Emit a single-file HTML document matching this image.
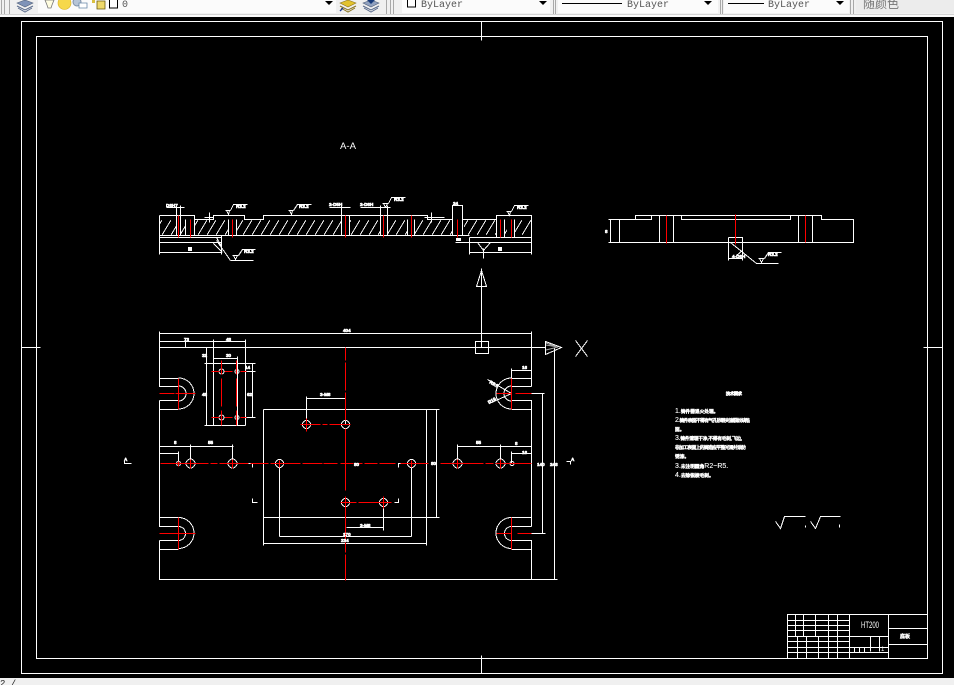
<!DOCTYPE html>
<html><head><meta charset="utf-8"><style>
html,body{margin:0;padding:0;background:#000;width:954px;height:685px;overflow:hidden}
svg{display:block;position:absolute;left:0;top:0}
text{font-family:"Liberation Sans","Noto Sans CJK SC",sans-serif}
.b{fill:#fff;stroke:#fff;stroke-width:.55;font-size:4.7px}
.n{font-size:7px;stroke-width:.1}
.d{fill:#fff;stroke:#fff;stroke-width:.6;font-size:4.6px;font-weight:bold}
.t{font-family:"Liberation Mono","Noto Sans CJK SC",monospace;font-size:10px;fill:#555}
</style></head><body>
<svg width="954" height="685" viewBox="0 0 954 685">
<defs>
<pattern id="h" patternUnits="userSpaceOnUse" x="0" y="220" width="9" height="15">
<path d="M0 15L9 0" stroke="#fff" stroke-width="1" fill="none" shape-rendering="crispEdges"/>
</pattern>
</defs>
<rect width="954" height="685" fill="#000"/>

<!-- top toolbar -->
<rect width="954" height="17" fill="#f0f0f0"/>
<rect y="14" width="954" height="1" fill="#d4d4d4"/>
<rect y="15" width="954" height="2" fill="#fafafa"/>
<g fill="#a8a8a8">
<rect x="1" y="0" width="1" height="14"/><rect x="4" y="0" width="1" height="14"/><rect x="9" y="0" width="1" height="14"/>
<rect x="386" y="0" width="1" height="14"/><rect x="390" y="0" width="1" height="14"/><rect x="393" y="0" width="1" height="14"/>
<rect x="553" y="0" width="1" height="14"/><rect x="555" y="0" width="1" height="14"/>
<rect x="720" y="0" width="1" height="14"/><rect x="722" y="0" width="1" height="14"/>
<rect x="850" y="0" width="1" height="14"/><rect x="853" y="0" width="1" height="14"/>
</g>
<rect x="38" y="0" width="298" height="13" fill="#fbfbfb"/>
<rect x="402" y="0" width="148" height="13" fill="#fbfbfb"/>
<rect x="558" y="0" width="160" height="13" fill="#fbfbfb"/>
<rect x="724" y="0" width="125" height="13" fill="#fbfbfb"/>
<rect x="856" y="0" width="98" height="13" fill="#ececec"/>
<!-- layer icons -->
<g>
<path d="M17 3L25 0L33 3L25 7Z" fill="#7f93b8" stroke="#52607a" stroke-width=".6"/>
<path d="M17 6L25 10L33 6M18 8L25 12L32 8" fill="none" stroke="#5a6b8c" stroke-width="1"/>
<path d="M45 0H54L52 5L51 8H48L47 5Z" fill="#fffde0" stroke="#777" stroke-width=".8"/>
<circle cx="64.500" cy="3" r="6.500" fill="#f6d84a" stroke="#d8b020" stroke-width=".6"/>
<circle cx="77" cy="2" r="4" fill="#b6c4d6" stroke="#7e90a8"/>
<path d="M79 3H87V8H79Z" fill="#fff" stroke="#6a88a8" stroke-width=".8"/>
<path d="M97 1H105V9H97Z" fill="#efd96a" stroke="#6b5a10" stroke-width=".8"/>
<path d="M92 0H95V3H92Z" fill="#d9c040"/>
<rect x="109.500" y="-1" width="8" height="9" fill="#fff" stroke="#000"/>
<text x="122" y="7" style="font-family:'Liberation Mono',monospace;font-size:10px" fill="#555">0</text>
<path d="M325 1H333L329 5Z" fill="#000"/>
<path d="M340 3L348 0L356 3L348 7Z" fill="#e2c22e" stroke="#8a7420" stroke-width=".6"/>
<path d="M340 6L348 10L356 6M341 8L348 12L355 8" fill="none" stroke="#8a7420" stroke-width="1"/>
<path d="M340 11L343 8" stroke="#1a3a9a" stroke-width="1.300"/>
<path d="M363 3L371 0L379 3L371 7Z" fill="#8fa0bf" stroke="#52607a" stroke-width=".6"/>
<path d="M363 6L371 10L379 6M364 8L371 12L378 8" fill="none" stroke="#5a6b8c" stroke-width="1"/>
<path d="M367 0H375L371 4Z" fill="#173a7a"/>
<rect x="407.500" y="-1" width="8" height="8" fill="#fff" stroke="#000"/>
<text class="t" x="421" y="7">ByLayer</text>
<path d="M539 1H547L543 5Z" fill="#000"/>
<rect x="562" y="3" width="60" height="1" fill="#000"/>
<text class="t" x="627" y="7">ByLayer</text>
<path d="M704 1H712L708 5Z" fill="#000"/>
<rect x="728" y="3" width="36" height="1" fill="#000"/>
<text class="t" x="768" y="7">ByLayer</text>
<path d="M836 1H844L840 5Z" fill="#000"/>
<text x="863" y="8" style="font-size:12px;font-family:'Liberation Sans','Noto Sans CJK SC',sans-serif" fill="#777">随颜色</text>
</g>

<!-- bottom bar -->
<rect x="0" y="678" width="954" height="7" fill="#f0f0f0"/>
<text x="0" y="686" style="font-family:'Liberation Mono',monospace;font-size:9px" fill="#222">2 /</text>

<!-- hatch -->
<g fill="url(#h)" shape-rendering="crispEdges">
<rect x="160" y="220" width="16" height="15"/>
<rect x="181" y="220" width="4" height="15"/>
<rect x="195" y="220" width="33" height="15"/>
<rect x="237" y="220" width="104" height="15"/>
<rect x="350" y="220" width="30" height="15"/>
<rect x="388" y="220" width="19" height="15"/>
<rect x="415" y="220" width="37" height="15"/>
<rect x="464" y="220" width="32" height="15"/>
<rect x="505" y="220" width="2" height="15"/>
<rect x="515" y="220" width="16" height="15"/>
</g>

<g transform="translate(.5 .5)" fill="none" stroke="#fff" stroke-width="1" shape-rendering="crispEdges">
<!-- frames -->
<path d="M21 21H942V673H21Z"/>
<path d="M36 36H927V658H36Z"/>
<path d="M481 21V40M481 655V673M21 347H40M923 347H942"/>

<!-- section view A-A -->
<path d="M159 215V254M159 215H194V219H213V215H244V219H263V215H427V219H452V205H462V219H496V215H531V254"/>
<path d="M159 235H469M159 237H221M159 242H221M159 252H221M221 235V254"/>
<path d="M469 237H531M455 242H531M469 237V254M469 252H531"/>
<path d="M176 205V235M180 205V235M185 219V235M194 215V235M228 219V235M236 219V235M341 205V235M349 215V235M380 205V235M387 205V235M407 219V235M414 219V235M452 219V235M462 219V235M496 215V237M504 219V237M514 219V237"/>
<path d="M166 207H184M329 207H350M360 207H390"/>
<path d="M209 212V222M204 217H213M431 212V222M424 217H436M433 217H444"/>
<!-- roughness marks -->
<path d="M225 210H230M226 210L228 214L229 210M230 210L233 204H247"/>
<path d="M288 210H293M289 210L291 214L292 210M293 210L297 204H311"/>
<path d="M382 203H388M383 203L385 207L387 203M388 203L391 197H405"/>
<path d="M506 211H511M507 211L509 215L510 211M511 211L514 205H528"/>
<path d="M232 255H238M233 255L235 259L237 255M238 255L242 249H255M230 260H253M216 240L230 260M213 243L222 252"/>
<path d="M477 242L483 250L490 242M483 248V258"/>
<path d="M216 237L221 246"/>

<!-- side view -->
<path d="M608 219H635V215H651V219H635M651 215H821V219H853V242H608M681 215V219H790V215M610 219V242M619 219V242M659 215V242M673 215V242M798 215V242M812 215V242"/>
<path d="M728 237H742V260M728 237V260M728 258H742M730 242L756 263H778M758 258H764M759 258L761 262L763 258M764 258L768 252H781M742 250L736 255"/>

<!-- plan view outline -->
<path d="M159 331V386H178M159 400H178M159 400V526H178M159 540H178M159 540V579H531V540H511M531 526H511M531 526V400H511M531 386H511M531 386V331"/>
<path d="M159 333H531M159 347H545M159 341H245M213 339V347M245 339V347M185 338V347M531 579H557M554 347V579"/>
<path d="M159 378H178M159 409H178M159 517H178M159 549H178M511 378H531M511 409H531M511 517H531M511 549H531"/>
<path d="M531 393H544M542 393V533M531 533H545"/>
<!-- rect pattern -->
<path d="M206 347V425M213 347V425M245 347V425M204 363H255M204 425H245M252 363V417M246 371H255M246 417H255M213 358H237M237 356V425"/>
<!-- big rect -->
<path d="M263 409H439M263 409V545M426 409V545M436 409V517M263 517H439M263 543H426M279 536H411M279 463V536M411 463V536"/>
<path d="M306 396V424M306 398H345M345 396V424M383 502V530M346 527H383"/>
<path d="M190 444V463M232 444V463M159 446H233M159 453H178M178 451V463"/>
<path d="M457 444V463M500 444V463M457 446H531M511 453H531M511 451V463M511 370H531M511 368V378"/>
<!-- section marks -->
<path d="M248 463H252V467M252 498V502H257M398 467V463H403M394 502H398V498M566 461H570V464M124 460V463H131"/>
<!-- arrow and box -->
<path d="M481 268V347M475 341H488V353H475ZM476 286L481 270L486 286ZM545 341V354L561 347Z"/>
<path d="M575 340L587 356M587 340L575 356"/>
<!-- leader lines near radial dims -->
<path d="M487 379L511 393M489 403L511 393"/>
<!-- title block -->
<path d="M787 614H927V658H787ZM849 614V658M888 614V658M888 628H927M888 644H927"/>
<path d="M787 620H849M787 625H849M787 630H849M787 636H888M787 641H849M787 647H888M787 652H888"/>
<path d="M795 614V636M803 614V636M815 614V636M828 614V658M837 614V658M797 636V658M806 636V658M818 636V658"/>
<path d="M870 636V651M879 636V651M854 647V652M859 647V652M864 647V652"/>
<!-- sqrt symbols -->
<path d="M775 521L780 528L784 516H805M810 521L815 528L820 516H840M839 524V527M805 525V527"/>
</g>
<path d="M546 345L558 347L546 350M546 343L555 346" fill="none" stroke="#aaa" stroke-width="1"/>

<!-- arcs -->
<g fill="none" stroke="#fff" stroke-width="1" shape-rendering="crispEdges">
<path d="M178.500 378A15.500 15.500 0 0 1 178.500 409M178.500 386A7.500 7.500 0 0 1 178.500 401"/>
<path d="M178.500 517.500A15.500 15.500 0 0 1 178.500 548.500M178.500 526.500A7 7 0 0 1 178.500 540.500"/>
<path d="M511.500 378A15.500 15.500 0 0 0 511.500 409M511.500 386A7.500 7.500 0 0 0 511.500 401"/>
<path d="M511.500 517.500A15.500 15.500 0 0 0 511.500 548.500M511.500 526.500A7 7 0 0 0 511.500 540.500"/>
<circle cx="221.500" cy="371.500" r="2.500"/><circle cx="237" cy="371.500" r="2"/>
<circle cx="221.500" cy="417.500" r="2.500"/><circle cx="237" cy="417.500" r="2"/>
<circle cx="306.500" cy="424.500" r="4"/><circle cx="345.500" cy="424.500" r="4"/>
<circle cx="345.500" cy="502.500" r="4"/><circle cx="383.500" cy="502.500" r="4"/>
<circle cx="190.500" cy="463.500" r="4.500"/><circle cx="232.500" cy="463.500" r="4.500"/>
<circle cx="279.500" cy="463.500" r="4"/><circle cx="411.500" cy="463.500" r="4"/>
<circle cx="457.500" cy="463.500" r="4.500"/><circle cx="500.500" cy="463.500" r="4.500"/>
<circle cx="178.500" cy="463.500" r="2"/><circle cx="512" cy="463.500" r="2"/>
</g>

<!-- red lines -->
<g transform="translate(.5 .5)" fill="none" stroke="#f00" stroke-width="1" shape-rendering="crispEdges">
<path d="M178 215V237M190 219V237M232 219V237M345 215V237M383 215V237M411 215V237M457 219V237M500 219V237M511 219V237"/>
<path d="M666 215V243M735 214V244M805 215V242"/>
<path d="M178 378V409M159 393H174M175 393H195M178 517V549M159 533H195"/>
<path d="M511 378V409M496 393H511M515 393H531M511 517V549M496 533H511M517 533H531"/>
<path d="M221 360V374M221 378V406M221 410V425M236 360V374M236 378V406M236 410V425M211 371H219M224 371H232M240 371H246M211 417H219M224 417H232M240 417H246"/>
<path d="M345 347V360M345 362V390M345 392V420M345 428V490M345 496V540M345 542V552M345 554V580"/>
<path d="M300 424H320M322 424H327M329 424H350M306 418V431"/>
<path d="M340 502H350M346 502H356M358 502H391M383 496V508"/>
<path d="M160 463H208M210 463H217M219 463H248M250 463H268M270 463H300M302 463H322M323 463H337M340 463H353M355 463H362M364 463H377M379 463H395M400 463H428M440 463H483M485 463H493M495 463H531"/>
<path d="M190 459V468M232 459V468M178 461V466M279 460V467M411 460V467M457 459V468M500 459V468"/>
</g>

<!-- small filled dim blobs -->
<g fill="#fff">
<rect x="188" y="247" width="4" height="4"/><rect x="498" y="247" width="4" height="4"/>
<rect x="456" y="238" width="5" height="3"/>
</g>
<text x="340" y="149" fill="#fff" style="font-size:9px;font-family:'Liberation Sans',sans-serif" textLength="16" lengthAdjust="spacingAndGlyphs">A-A</text>
<text class="d" x="166" y="207">D8H7</text>
<text class="d" x="236" y="208">R3.2</text>
<text class="d" x="299" y="208">R3.2</text>
<text class="d" x="329" y="206">2-D5H</text>
<text class="d" x="360" y="206">2-D8H</text>
<text class="d" x="394" y="201">R3.2</text>
<text class="d" x="517" y="209">R3.2</text>
<text class="d" x="244" y="253">R3.2</text>
<text class="d" x="453" y="205">24</text>
<text class="d" x="605" y="233">8</text>
<text class="d" x="768" y="256">R3.2</text>
<text class="d" x="732" y="258">4-D8H</text>
<text class="d" x="343" y="332">404</text>
<text class="d" x="184" y="341">73</text>
<text class="d" x="226" y="341">48</text>
<text class="d" x="202" y="357">32</text>
<text class="d" x="226" y="357">30</text>
<text class="d" x="245" y="369">14</text>
<text class="d" x="202" y="396">48</text>
<text class="d" x="247" y="396">62</text>
<text class="d" x="320" y="396">3-M8</text>
<text class="d" x="360" y="527">3-M8</text>
<text class="d" x="174" y="444">8</text>
<text class="d" x="208" y="444">55</text>
<text class="d" x="476" y="444">55</text>
<text class="d" x="515" y="445">8</text>
<text class="d" x="522" y="369">16</text>
<text class="d" x="522" y="454">16</text>
<text class="d" x="343" y="536">170</text>
<text class="d" x="341" y="542">234</text>
<text class="d" x="354" y="466">80</text>
<text class="d" x="431" y="465">80</text>
<text class="d" x="537" y="466">140</text>
<text class="d" x="550" y="466">248</text>
<text class="d" x="124" y="461">A</text>
<text class="d" x="571" y="461">A</text>
<text class="d" x="489" y="383" transform="rotate(30 489 383)">R9.5</text>
<text class="d" x="489" y="404" transform="rotate(-30 489 404)">R19</text>

<!-- technical notes -->
<text class="b" x="726" y="395" style="font-size:4.2px;stroke-width:.7" textLength="16" lengthAdjust="spacing">技术要求</text>
<text class="b" x="675" y="413"><tspan class="n">1.</tspan>铸件需退火处理。</text>
<text class="b" x="675" y="422" textLength="75" lengthAdjust="spacing"><tspan class="n">2.</tspan>铸件表面不得有气孔砂眼夹渣裂纹缺陷</text>
<text class="b" x="675" y="431">面。</text>
<text class="b" x="675" y="440" textLength="67" lengthAdjust="spacing"><tspan class="n">3.</tspan>铸件清理干净,不得有毛刺,飞边,</text>
<text class="b" x="675" y="449" textLength="71" lengthAdjust="spacing">非加工表面上的铸造应平整光滑并涂防</text>
<text class="b" x="675" y="458">锈漆。</text>
<text class="b" x="675" y="468"><tspan class="n">3.</tspan>未注明圆角<tspan class="n">R2~R5.</tspan></text>
<text class="b" x="675" y="477"><tspan class="n">4.</tspan>去除锐棱毛刺。</text>

<!-- title block text -->
<text x="861" y="628" fill="#fff" style="font-size:9px;font-family:'Liberation Sans',sans-serif" textLength="18" lengthAdjust="spacingAndGlyphs">HT200</text>
<text x="900" y="638" style="font-size:5px" fill="#fff" stroke="#fff" stroke-width=".5">底板</text>
<text x="881" y="651" style="font-size:6px;font-family:'Liberation Sans',sans-serif" fill="#fff">1</text>
</svg>
</body></html>
